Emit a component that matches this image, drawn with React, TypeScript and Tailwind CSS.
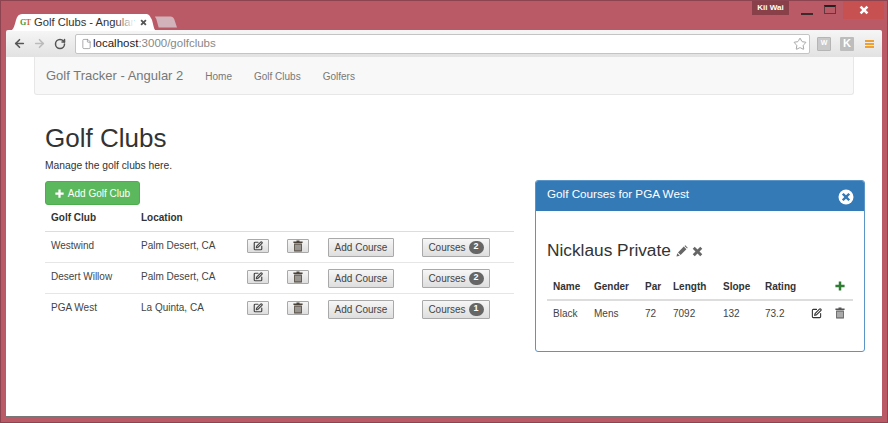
import React from 'react'
import { ArrowLeft, ArrowRight, File, RotateCw, SquarePen, Star } from 'lucide-react'

const Plus = ({ className }: { className?: string }) => (
  <svg viewBox="0 0 12 12" className={className} fill="currentColor">
    <path d="M4.5 0.5h3v4h4v3h-4v4h-3v-4h-4v-3h4z" />
  </svg>
)

const Cross = ({ className }: { className?: string }) => (
  <svg viewBox="0 0 12 12" className={className} fill="currentColor">
    <path d="M3 0.8L6 3.8L9 0.8L11.2 3L8.2 6L11.2 9L9 11.2L6 8.2L3 11.2L0.8 9L3.8 6L0.8 3z" />
  </svg>
)

const RemoveCircle = ({ className }: { className?: string }) => (
  <svg viewBox="0 0 16 16" className={className}>
    <circle cx="8" cy="8" r="7.5" fill="#fff" />
    <path d="M5.6 3.9L8 6.3L10.4 3.9L12.1 5.6L9.7 8L12.1 10.4L10.4 12.1L8 9.7L5.6 12.1L3.9 10.4L6.3 8L3.9 5.6z" fill="#337ab7" />
  </svg>
)

const Trash = ({ className }: { className?: string }) => (
  <svg viewBox="0 0 12 14" className={className} fill="currentColor">
    <path d="M4.2 0.5h3.6v1.2h3.7v1.6h-11v-1.6h3.7z" />
    <path d="M1.4 4h9.2v9.5h-9.2zM3 5.2v7.1h1.2v-7.1zM5.4 5.2v7.1h1.2v-7.1zM7.8 5.2v7.1h1.2v-7.1z" fillRule="evenodd" />
  </svg>
)

const Pencil = ({ className }: { className?: string }) => (
  <svg viewBox="0 0 12 12" className={className} fill="currentColor">
    <path d="M0.5 11.5L1.2 8.2L3.8 10.8zM2 7.4L7.8 1.6L10.4 4.2L4.6 10zM8.5 0.9L9.3 0.3L11.7 2.7L11.1 3.5z" />
  </svg>
)

const greyBtn = 'border border-[#a9a9a9] bg-gradient-to-b from-[#f6f6f6] to-[#dedede] text-[#444] rounded-[1px] flex items-center justify-center'

const clubs = [
  { name: 'Westwind', location: 'Palm Desert, CA', courses: 2 },
  { name: 'Desert Willow', location: 'Palm Desert, CA', courses: 2 },
  { name: 'PGA West', location: 'La Quinta, CA', courses: 1 },
]

const BrowserChrome = () => (
  <>
    {/* tab strip */}
    <div className="h-[29px] flex items-end relative shrink-0">
      <div className="relative w-[149px] h-[17px] ml-[2px] -mb-[1px]">
        <svg viewBox="0 0 149 17" className="absolute inset-0 w-[149px] h-[17px]">
          <path d="M0 17C5 17 6 14 8 6C9 2 11 0 14 0H138C141 0 142 2 144 6C146 13 146 17 149 17Z" fill="#ffffff" />
        </svg>
        <div className="relative flex items-center h-[17px] pl-[12px]">
          <span className="text-[8px] font-bold leading-none w-[14px] tracking-[-0.5px]" style={{ fontFamily: '"Liberation Serif", serif' }}>
            <span className="text-[#3c9a3c]">G</span>
            <span className="text-[#d9662a]">T</span>
          </span>
          <span className="relative w-[100px] whitespace-nowrap text-[11.2px] text-[#333]">
            Golf Clubs - Angular
            <span className="absolute right-0 top-0 bottom-0 w-[18px] bg-gradient-to-r from-white/0 to-white" />
          </span>
          <Cross className="w-[7px] h-[7px] ml-[6px] text-[#555]" />
        </div>
      </div>
      <svg viewBox="0 0 24 12" className="w-[22px] h-[12px] mb-[2px] -ml-[2px] shrink-0">
        <path d="M0 0H17C19 0 20 1 21 3L24 12H4L1.5 3C1 1.5 0 1 0 0Z" fill="#d3b3bb" />
      </svg>
      <div className="ml-auto self-start flex items-start h-[20px] -mt-[1px]">
        <div className="w-[37px] h-[15px] bg-[#8a4049] text-white text-[8px] font-bold flex items-center justify-center">Kii Wai</div>
        <div className="w-[12px] h-[10px] border-b-2 border-[#3a2a2c] ml-[12px] mt-[5px]" />
        <div className="w-[12px] h-[9px] border border-[#5e3a40] border-t-2 border-t-[#222] ml-[11px] mt-[5px]" />
        <div className="w-[41px] h-[18px] bg-[#c75050] ml-[7px] mt-[1px] -mr-[2px] flex items-center justify-center">
          <Cross className="w-[10px] h-[10px] text-white" />
        </div>
      </div>
    </div>

    {/* toolbar */}
    <div className="h-[27px] bg-gradient-to-b from-[#f6f6f6] to-[#e2e2e2] flex items-center shrink-0 rounded-t-[2px]">
      <ArrowLeft className="w-[13px] h-[13px] text-[#555] ml-[7px]" strokeWidth={3} />
      <ArrowRight className="w-[13px] h-[13px] text-[#bbb] ml-[7px]" strokeWidth={3} />
      <RotateCw className="w-[12px] h-[12px] text-[#555] ml-[8px]" strokeWidth={3} />
      <div className="ml-[9px] w-[735px] h-[20px] bg-white border border-[#c4c4c4] rounded-[2px] flex items-center pl-[5px]">
        <File className="w-[11px] h-[12px] text-[#888]" strokeWidth={1.5} />
        <span className="ml-[1px] pt-[1px] text-[11.5px] text-[#888]">
          <span className="text-[#222]">localhost</span>:3000/golfclubs
        </span>
        <Star className="w-[14px] h-[14px] text-[#999] ml-auto mr-[2px]" strokeWidth={1.5} />
      </div>
      <div className="ml-[7px] w-[14px] h-[14px] bg-[#c9c9c9] border border-[#b5b5b5] rounded-[1px] flex items-center justify-center text-white text-[7px] font-bold">W</div>
      <div className="ml-[9px] w-[14px] h-[14px] bg-[#bdbdbd] rounded-[1px] flex items-center justify-center text-white text-[11px] font-bold">K</div>
      <div className="ml-[11px] w-[9px] flex flex-col gap-[1px]">
        <div className="h-[2px] bg-[#f0a030]" />
        <div className="h-[2px] bg-[#f0a030]" />
        <div className="h-[2px] bg-[#f0a030]" />
      </div>
    </div>
  </>
)

const ClubsTable = () => (
  <table className="w-[469px] table-fixed border-collapse text-[10px] text-[#444]">
    <colgroup>
      <col className="w-[90px]" />
      <col className="w-[106px]" />
      <col className="w-[40px]" />
      <col className="w-[41px]" />
      <col className="w-[94px]" />
      <col />
    </colgroup>
    <thead>
      <tr className="h-[26px] border-b border-[#ddd] text-[#333]">
        <th className="text-left pl-[6px] font-bold">Golf Club</th>
        <th className="text-left pl-[6px] font-bold">Location</th>
        <th colSpan={4} />
      </tr>
    </thead>
    <tbody>
      {clubs.map((club, index) => (
        <tr key={index} className={`h-[31px] align-top ${index < 2 ? 'border-b border-[#e6e6e6]' : ''}`}>
          <td className="pl-[6px] pt-[7px] leading-[14px]">{club.name}</td>
          <td className="pl-[6px] pt-[7px] leading-[14px]">{club.location}</td>
          <td className="pl-[6px] pt-[7px]">
            <button className={`${greyBtn} w-[22px] h-[14px]`}>
              <SquarePen className="w-[10px] h-[10px]" strokeWidth={2.8} />
            </button>
          </td>
          <td className="pl-[6px] pt-[7px]">
            <button className={`${greyBtn} w-[22px] h-[14px]`}>
              <Trash className="w-[10px] h-[12px] text-[#4a4238]" />
            </button>
          </td>
          <td className="pl-[6px] pt-[6px]">
            <button className={`${greyBtn} w-[66px] h-[19px] text-[10px]`}>Add Course</button>
          </td>
          <td className="pl-[6px] pt-[6px]">
            <button className={`${greyBtn} w-[68px] h-[19px] text-[10px] gap-[3px]`}>
              Courses
              <span className="w-[15px] h-[13px] rounded-full bg-[#666] text-white text-[9px] font-bold flex items-center justify-center">{club.courses}</span>
            </button>
          </td>
        </tr>
      ))}
    </tbody>
  </table>
)

const CoursesPanel = () => (
  <div className="w-[330px] h-[172px] -mt-[1px] border border-[#5b94c6] rounded-[3px] overflow-hidden">
    <div className="h-[30px] bg-[#337ab7] flex items-start justify-between pl-[11px] pr-[11px]">
      <span className="text-[11.7px] text-white mt-[4px]">Golf Courses for PGA West</span>
      <RemoveCircle className="w-[16px] h-[16px] mt-[8px] mr-[-1px]" />
    </div>
    <div className="px-[11px]">
      <div className="flex items-center mt-[29px] h-[22px] text-[17.3px] text-[#333]">
        Nicklaus Private
        <Pencil className="w-[12px] h-[12px] ml-[5px] text-[#666]" />
        <Cross className="w-[11px] h-[11px] ml-[4px] text-[#666]" />
      </div>
      <table className="w-[306px] mt-[11px] table-fixed border-collapse text-[10px] text-[#444]">
        <colgroup>
          <col className="w-[41px]" />
          <col className="w-[51px]" />
          <col className="w-[28px]" />
          <col className="w-[50px]" />
          <col className="w-[42px]" />
          <col className="w-[46px]" />
          <col className="w-[24px]" />
          <col className="w-[24px]" />
        </colgroup>
        <thead>
          <tr className="h-[27px] border-b-2 border-[#ddd] text-[#333]">
            {['Name', 'Gender', 'Par', 'Length', 'Slope', 'Rating'].map((label) => (
              <th key={label} className="text-left pl-[6px] font-bold">{label}</th>
            ))}
            <th />
            <th className="pl-[6px]">
              <Plus className="w-[10px] h-[10px] text-[#2e7d32]" />
            </th>
          </tr>
        </thead>
        <tbody>
          <tr className="h-[25px]">
            {['Black', 'Mens', '72', '7092', '132', '73.2'].map((value) => (
              <td key={value} className="pl-[6px]">{value}</td>
            ))}
            <td className="pl-[6px]">
              <SquarePen className="w-[11px] h-[11px] text-[#333]" strokeWidth={2.4} />
            </td>
            <td className="pl-[6px]">
              <Trash className="w-[10px] h-[12px] text-[#555]" />
            </td>
          </tr>
        </tbody>
      </table>
    </div>
  </div>
)

export default function App() {
  return (
    <div
      className="w-[888px] h-[423px] overflow-hidden bg-[#b95a66] flex flex-col pl-[5px] pr-[5px] pb-[5px] border border-[#8c4550]"
      style={{ fontFamily: '"Liberation Sans", Arial, sans-serif' }}
    >
      <BrowserChrome />
      <div className="flex-1 bg-white border-b border-[#777]">
        {/* navbar */}
        <div className="ml-[28px] w-[820px] h-[38px] pt-[1px] bg-[#f8f8f8] border border-t-0 border-[#e7e7e7] rounded-b-[3px] flex items-center pl-[11px]">
          <span className="text-[13px] text-[#777]">Golf Tracker - Angular 2</span>
          <span className="ml-[22px] text-[10px] text-[#777]">Home</span>
          <span className="ml-[22px] text-[10px] text-[#777]">Golf Clubs</span>
          <span className="ml-[22px] text-[10px] text-[#777]">Golfers</span>
        </div>

        <div className="pl-[39px]">
          <h1 className="mt-[28px] text-[26px] leading-[30px] text-[#333]">Golf Clubs</h1>
          <p className="mt-[6px] text-[10.3px] leading-[14px] text-[#333]">Manage the golf clubs here.</p>
          <div className="flex items-start gap-[21px] mt-[8px]">
            <div className="w-[469px]">
              <button className="w-[95px] h-[24px] bg-[#5cb85c] border border-[#4cae4c] rounded-[3px] text-white text-[10px] flex items-center justify-center gap-[4px]">
                <Plus className="w-[9px] h-[9px]" />
                Add Golf Club
              </button>
              <ClubsTable />
            </div>
            <CoursesPanel />
          </div>
        </div>
      </div>
    </div>
  )
}
